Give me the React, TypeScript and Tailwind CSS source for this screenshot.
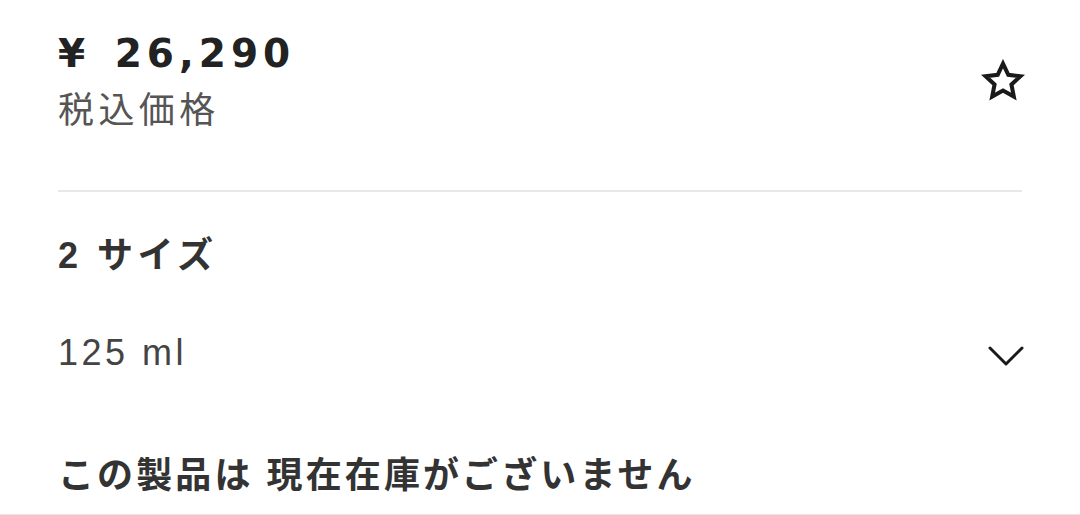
import React from 'react';

const font = { fontFamily: '"Liberation Sans", "Noto Sans CJK JP", sans-serif' };
const priceFont = { fontFamily: '"DejaVu Sans", "Liberation Sans", sans-serif' };

function StarIcon() {
  return (
    <svg width="44" height="44" viewBox="0 0 24 24" fill="none" stroke="#1a1a1a" strokeWidth="2.2" strokeLinejoin="miter">
      <polygon points="12,2.5 14.9,8.6 21.5,9.4 16.6,13.9 17.9,20.5 12,17.2 6.1,20.5 7.4,13.9 2.5,9.4 9.1,8.6" />
    </svg>
  );
}

function ChevronDown() {
  return (
    <svg width="36" height="22" viewBox="0 0 36 22" fill="none" stroke="#1a1a1a" strokeWidth="3" strokeLinecap="round" strokeLinejoin="round">
      <polyline points="2,3 18,19 34,3" />
    </svg>
  );
}

export default function App() {
  return (
    <div className="w-[1080px] h-[515px] bg-white border-b border-[#e6e6e6] overflow-hidden" style={font}>
      <div className="px-[58px]">
        <div className="pt-[30px] flex items-center justify-between">
          <div className="flex flex-col">
            <span className="text-[39px] leading-[48px] font-bold tracking-[5px] text-[#222]" style={priceFont}>
              <span className="mr-[6px]">¥</span> 26,290
            </span>
            <span className="mt-[11px] text-[36px] leading-[44px] tracking-[4.4px] text-[#555]">税込価格</span>
          </div>
          <button className="mr-[-3px] mt-[-2px]" title="お気に入り">
            <StarIcon />
          </button>
        </div>

        <div className="mt-[57px] h-[2px] bg-[#e8e8e8]" />

        <h2 className="mt-[42px] text-[36px] leading-[44px] font-bold tracking-[4.5px] text-[#333]">2 サイズ</h2>

        <div className="mt-[53px] flex items-center justify-between">
          <span className="text-[36px] leading-[44px] tracking-[3.5px] text-[#444]">125 ml</span>
          <span className="mr-[-2px] mt-[6px]">
            <ChevronDown />
          </span>
        </div>

        <p className="mt-[79px] text-[36px] leading-[44px] font-bold tracking-[3.1px] text-[#333]">この製品は 現在在庫がございません</p>
      </div>
    </div>
  );
}
